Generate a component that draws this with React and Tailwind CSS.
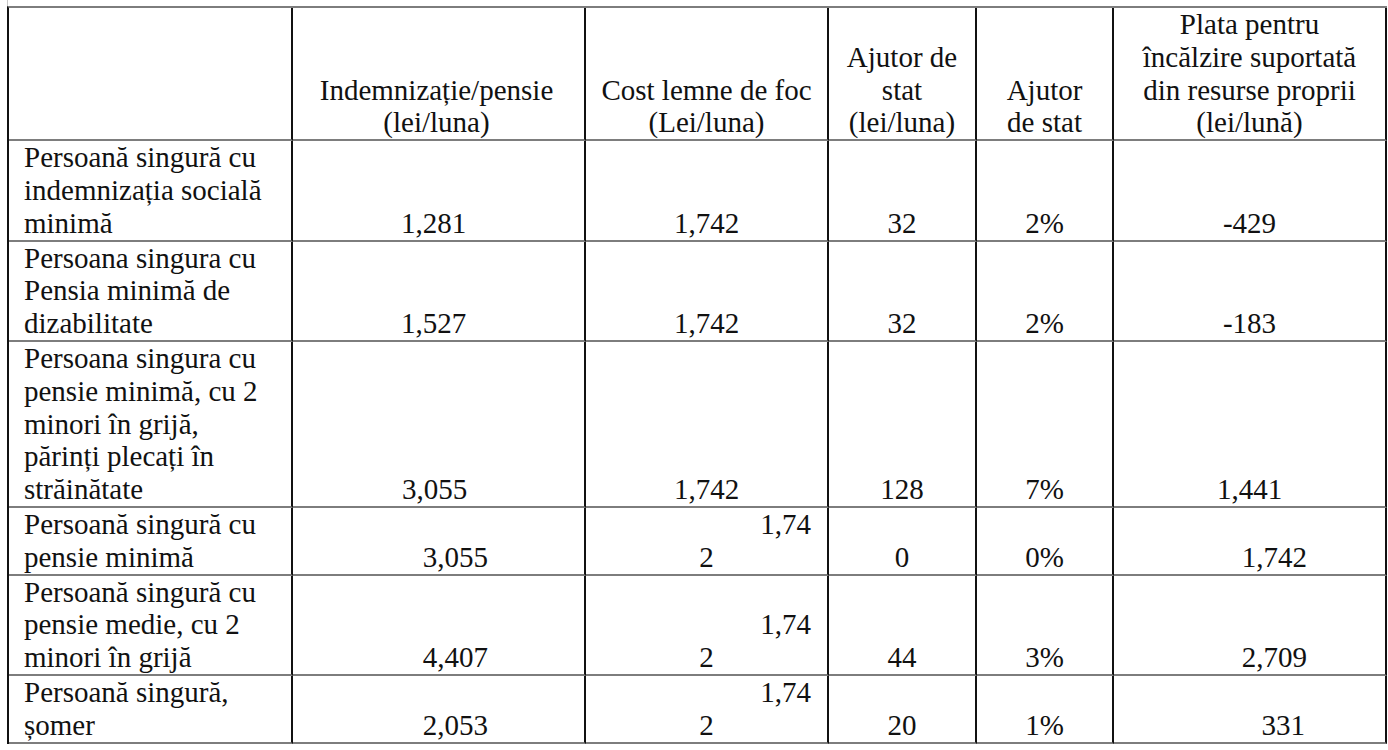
import React from "react";

const H = "border-b-2 border-r-2 border-b-[#7d7d7d] border-r-[#111]";

function Cell({ children, className = "" }) {
  return (
    <div className={`${H} flex flex-col justify-end whitespace-nowrap ${className}`}>
      {children}
    </div>
  );
}

function Label({ lines }) {
  return (
    <div className={`${H} flex flex-col justify-start whitespace-nowrap pl-[15px] text-left`}>
      {lines.map((l, i) => (
        <div key={i}>{l}</div>
      ))}
    </div>
  );
}

function Split() {
  return (
    <>
      <div className="text-right pr-[16px]">1,74</div>
      <div className="text-center">2</div>
    </>
  );
}

export default function App() {
  return (
    <div className="min-h-[750px] w-[1388px] bg-white font-['Liberation_Serif','Times_New_Roman',serif] text-[29px] leading-[32.8px] text-[#111]">
      <div className="ml-[7px] h-[6px] w-px bg-[#c8c8c8]" />
      <div className="ml-[7px] grid w-[1380px] grid-cols-[284px_293px_243px_148px_137px_273px] border-l-2 border-t-2 border-l-[#111] border-t-[#7d7d7d]">
        {/* Header */}
        <Cell />
        <Cell className="text-center pr-[4px]">
          <div>Indemnizație/pensie</div>
          <div>(lei/luna)</div>
        </Cell>
        <Cell className="text-center">
          <div>Cost lemne de foc</div>
          <div>(Lei/luna)</div>
        </Cell>
        <Cell className="text-center">
          <div>Ajutor de</div>
          <div>stat</div>
          <div>(lei/luna)</div>
        </Cell>
        <Cell className="text-center">
          <div>Ajutor</div>
          <div>de stat</div>
        </Cell>
        <Cell className="text-center">
          <div>Plata pentru</div>
          <div>încălzire suportată</div>
          <div>din resurse proprii</div>
          <div>(lei/lună)</div>
        </Cell>

        {/* Row 1 */}
        <Label lines={["Persoană singură cu", "indemnizația socială", "minimă"]} />
        <Cell className="text-center pr-[10px]">1,281</Cell>
        <Cell className="text-center">1,742</Cell>
        <Cell className="text-center">32</Cell>
        <Cell className="text-center">2%</Cell>
        <Cell className="text-center">-429</Cell>

        {/* Row 2 */}
        <Label lines={["Persoana singura cu", "Pensia minimă de", "dizabilitate"]} />
        <Cell className="text-center pr-[10px]">1,527</Cell>
        <Cell className="text-center">1,742</Cell>
        <Cell className="text-center">32</Cell>
        <Cell className="text-center">2%</Cell>
        <Cell className="text-center">-183</Cell>

        {/* Row 3 */}
        <Label
          lines={[
            "Persoana singura cu",
            "pensie minimă, cu 2",
            "minori în grijă,",
            "părinți plecați în",
            "străinătate",
          ]}
        />
        <Cell className="text-center pr-[8px]">3,055</Cell>
        <Cell className="text-center">1,742</Cell>
        <Cell className="text-center">128</Cell>
        <Cell className="text-center">7%</Cell>
        <Cell className="text-center">1,441</Cell>

        {/* Row 4 */}
        <Label lines={["Persoană singură cu", "pensie minimă"]} />
        <Cell className="text-right pr-[96px]">3,055</Cell>
        <Cell>
          <Split />
        </Cell>
        <Cell className="text-center">0</Cell>
        <Cell className="text-center">0%</Cell>
        <Cell className="text-right pr-[78px]">1,742</Cell>

        {/* Row 5 */}
        <Label lines={["Persoană singură cu", "pensie medie, cu 2", "minori în grijă"]} />
        <Cell className="text-right pr-[96px]">4,407</Cell>
        <Cell>
          <Split />
        </Cell>
        <Cell className="text-center">44</Cell>
        <Cell className="text-center">3%</Cell>
        <Cell className="text-right pr-[78px]">2,709</Cell>

        {/* Row 6 */}
        <Label lines={["Persoană singură,", "șomer"]} />
        <Cell className="text-right pr-[96px]">2,053</Cell>
        <Cell>
          <Split />
        </Cell>
        <Cell className="text-center">20</Cell>
        <Cell className="text-center">1%</Cell>
        <Cell className="text-right pr-[80px]">331</Cell>
      </div>
    </div>
  );
}
